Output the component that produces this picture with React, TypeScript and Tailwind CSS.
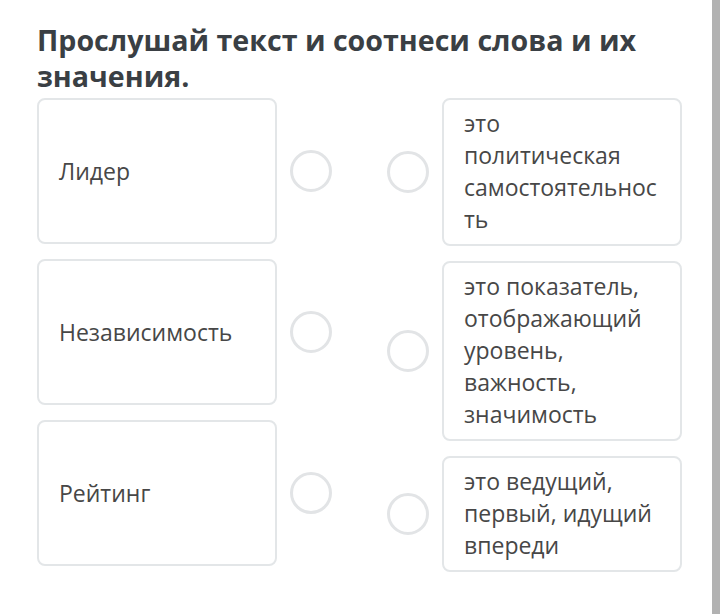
import React from 'react';

const left = ['Лидер', 'Независимость', 'Рейтинг'];
const right = [
  'это политическая самостоятельность',
  'это показатель, отображающий уровень, важность, значимость',
  'это ведущий, первый, идущий впереди',
];

function Dot() {
  return <span className="w-[42px] h-[42px] shrink-0 rounded-full border-[3px] border-[#e2e4e6]" />;
}

export default function App() {
  return (
    <div className="flex h-[614px] w-[720px] bg-white font-['Open_Sans',sans-serif] overflow-hidden">
      <div className="flex-1 pt-[22px] pl-[37px]">
        <h1 className="text-[28.6px] leading-[36px] font-bold text-[#3a3f44] pr-[40px]">
          Прослушай текст и соотнеси слова и их значения.
        </h1>

        <div className="flex mt-[4px]">
          <div className="flex flex-col gap-[15px]">
            {left.map((t) => (
              <div key={t} className="flex items-center gap-[13px]">
                <div className="w-[240px] h-[146px] rounded-lg border-2 border-[#e3e6e8] flex items-center px-[20px] text-[23px] leading-[32px] text-[#474747]">
                  {t}
                </div>
                <Dot />
              </div>
            ))}
          </div>

          <div className="flex flex-col gap-[15px] ml-[55px]">
            {right.map((t) => (
              <div key={t} className="flex items-center gap-[13px]">
                <Dot />
                <div className="w-[240px] rounded-lg border-2 border-[#e3e6e8] pl-[20px] pr-[20px] pt-[7px] pb-[9px] text-[23px] leading-[32px] text-[#474747] break-words">
                  {t}
                </div>
              </div>
            ))}
          </div>
        </div>
      </div>
      <div className="w-[8px] h-full bg-[#b2b2b2]" />
    </div>
  );
}
